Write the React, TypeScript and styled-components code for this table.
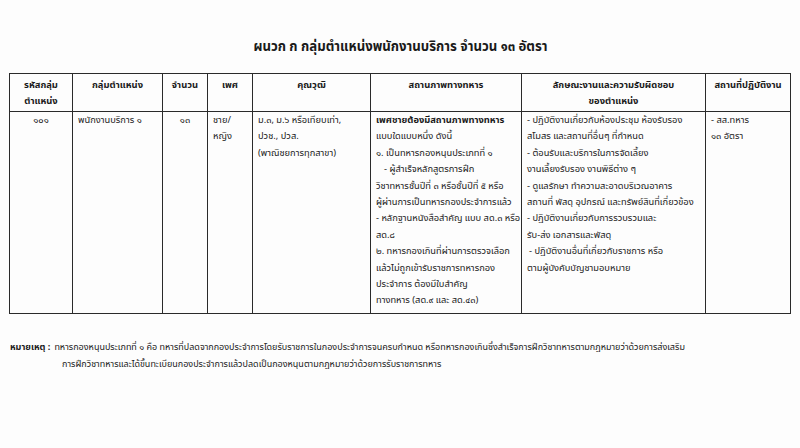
import styled, { createGlobalStyle } from 'styled-components';

const GlobalStyle = createGlobalStyle`
  html, body {
    margin: 0;
    padding: 0;
    background: #ffffff;
  }
  body {
    font-family: Tahoma, "Noto Sans Thai", "Noto Sans", "DejaVu Sans", sans-serif;
    color: #1a1a1a;
  }
`;

const Page = styled.div`
  width: 800px;
  height: 448px;
  box-sizing: border-box;
  padding: 38px 10px 0 9px;
  background: #fdfdfd;
  overflow: hidden;
`;

const Title = styled.h1`
  margin: 0 0 17px;
  text-align: center;
  font-size: 13.2px;
  font-weight: 700;
  line-height: 18px;
  padding-left: 2px;
`;

const Table = styled.table`
  width: 781px;
  border-collapse: collapse;
  table-layout: fixed;
  border: 1.5px solid #2a2a2a;
`;

const Th = styled.th<{ $align?: 'left' | 'center' }>`
  border: 1.5px solid #2a2a2a;
  padding: 3px 4px 2px;
  height: 29px;
  vertical-align: top;
  text-align: ${(p) => p.$align ?? 'center'};
  font-size: 9.4px;
  font-weight: 700;
  line-height: 16px;
`;

const Td = styled.td<{ $align?: 'left' | 'center' }>`
  border: 1.5px solid #2a2a2a;
  padding: 0 5px 2px;
  height: 199px;
  vertical-align: top;
  text-align: ${(p) => p.$align ?? 'left'};
  font-size: 9.3px;
  line-height: 16.4px;
`;

const Line = styled.div<{ $bold?: boolean; $indent?: number }>`
  font-weight: ${(p) => (p.$bold ? 700 : 400)};
  padding-left: ${(p) => p.$indent ?? 0}px;
  white-space: nowrap;
`;

const Note = styled.div`
  margin-top: 25px;
  font-size: 9px;
  line-height: 16.5px;
  padding-left: 1px;
`;

const NoteRow = styled.div`
  display: flex;
  gap: 4px;
  white-space: nowrap;
`;

const NoteLabel = styled.span`
  font-weight: 700;
`;

const NoteIndent = styled.div`
  padding-left: 52px;
  white-space: nowrap;
`;

const widths = [63, 90, 45, 45, 118, 151, 184, 85];

const status = [
  { t: 'เพศชายต้องมีสถานภาพทางทหาร', b: true },
  { t: 'แบบใดแบบหนึ่ง ดังนี้' },
  { t: '๑. เป็นทหารกองหนุนประเภทที่ ๑' },
  { t: '- ผู้สำเร็จหลักสูตรการฝึก', i: 8 },
  { t: 'วิชาทหารชั้นปีที่ ๓ หรือชั้นปีที่ ๕ หรือ' },
  { t: 'ผู้ผ่านการเป็นทหารกองประจำการแล้ว' },
  { t: '- หลักฐานหนังสือสำคัญ แบบ สด.๓ หรือ' },
  { t: 'สด.๘' },
  { t: '๒. ทหารกองเกินที่ผ่านการตรวจเลือก' },
  { t: 'แล้วไม่ถูกเข้ารับราชการทหารกอง' },
  { t: 'ประจำการ ต้องมีใบสำคัญ' },
  { t: 'ทางทหาร (สด.๙ และ สด.๔๓)' },
];

const duties = [
  { t: '- ปฏิบัติงานเกี่ยวกับห้องประชุม ห้องรับรอง' },
  { t: 'สโมสร และสถานที่อื่นๆ ที่กำหนด' },
  { t: '- ต้อนรับและบริการในการจัดเลี้ยง' },
  { t: 'งานเลี้ยงรับรอง งานพิธีต่าง ๆ' },
  { t: '- ดูแลรักษา ทำความสะอาดบริเวณอาคาร' },
  { t: 'สถานที่ พัสดุ อุปกรณ์ และทรัพย์สินที่เกี่ยวข้อง' },
  { t: '- ปฏิบัติงานเกี่ยวกับการรวบรวมและ' },
  { t: 'รับ-ส่ง เอกสารและพัสดุ' },
  { t: '- ปฏิบัติงานอื่นที่เกี่ยวกับราชการ หรือ', i: 2 },
  { t: 'ตามผู้บังคับบัญชามอบหมาย' },
];

export default function App() {
  return (
    <>
      <GlobalStyle />
      <Page>
        <Title>ผนวก ก กลุ่มตำแหน่งพนักงานบริการ จำนวน ๑๓ อัตรา</Title>
        <Table>
          <colgroup>
            {widths.map((w, i) => (
              <col key={i} style={{ width: w }} />
            ))}
          </colgroup>
          <thead>
            <tr>
              <Th>
                รหัสกลุ่ม
                <br />
                ตำแหน่ง
              </Th>
              <Th>กลุ่มตำแหน่ง</Th>
              <Th>จำนวน</Th>
              <Th>เพศ</Th>
              <Th>คุณวุฒิ</Th>
              <Th>สถานภาพทางทหาร</Th>
              <Th>
                ลักษณะงานและความรับผิดชอบ
                <br />
                ของตำแหน่ง
              </Th>
              <Th>สถานที่ปฏิบัติงาน</Th>
            </tr>
          </thead>
          <tbody>
            <tr>
              <Td $align="center">๑๐๑</Td>
              <Td>พนักงานบริการ ๑</Td>
              <Td $align="center">๑๓</Td>
              <Td>
                <Line>ชาย/</Line>
                <Line>หญิง</Line>
              </Td>
              <Td>
                <Line>ม.๓, ม.๖ หรือเทียบเท่า,</Line>
                <Line>ปวช., ปวส.</Line>
                <Line>(พาณิชยการทุกสาขา)</Line>
              </Td>
              <Td>
                {status.map((l, i) => (
                  <Line key={i} $bold={l.b} $indent={l.i}>
                    {l.t}
                  </Line>
                ))}
              </Td>
              <Td>
                {duties.map((l, i) => (
                  <Line key={i} $indent={l.i}>
                    {l.t}
                  </Line>
                ))}
              </Td>
              <Td>
                <Line>- สส.ทหาร</Line>
                <Line>๑๓ อัตรา</Line>
              </Td>
            </tr>
          </tbody>
        </Table>
        <Note>
          <NoteRow>
            <NoteLabel>หมายเหตุ :</NoteLabel>
            <span>
              ทหารกองหนุนประเภทที่ ๑ คือ ทหารที่ปลดจากกองประจำการโดยรับราชการในกองประจำการจนครบกำหนด หรือทหารกองเกินซึ่งสำเร็จการฝึกวิชาทหารตามกฎหมายว่าด้วยการส่งเสริม
            </span>
          </NoteRow>
          <NoteIndent>
            การฝึกวิชาทหารและได้ขึ้นทะเบียนกองประจำการแล้วปลดเป็นกองหนุนตามกฎหมายว่าด้วยการรับราชการทหาร
          </NoteIndent>
        </Note>
      </Page>
    </>
  );
}
